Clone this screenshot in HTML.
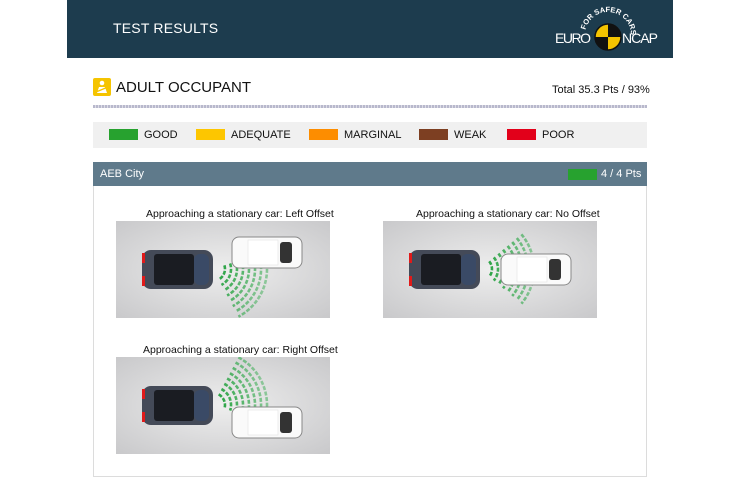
<!DOCTYPE html>
<html><head><meta charset="utf-8"><style>
*{margin:0;padding:0;box-sizing:border-box}
body{width:735px;height:485px;background:#fff;font-family:"Liberation Sans","DejaVu Sans",sans-serif;position:relative;overflow:hidden;color:#111}
.hdr{position:absolute;left:67px;top:0;width:606px;height:58px;background:#1d3c4e}
.hdr .t{position:absolute;left:46px;top:20px;color:#fff;font-size:14px;letter-spacing:.2px}
.abs{position:absolute}
.leg{position:absolute;left:93px;top:122px;width:554px;height:26px;background:#f0f0f0;font-size:11px}
.leg span{position:absolute;top:7px}
.leg i{position:absolute;top:7px;width:29px;height:11px}
.panel{position:absolute;left:93px;top:162px;width:554px;height:315px;border:1px solid #dcdcdc;border-top:none}
.ph{position:absolute;left:93px;top:162px;width:554px;height:24px;background:#5f7a8b;color:#fff;font-size:11px}
.cap{position:absolute;font-size:10.5px;color:#111;white-space:nowrap}
svg.sc{position:absolute;width:214px;height:97px}
</style></head><body>
<div class="hdr"><div class="t">TEST RESULTS</div>
<svg class="abs" style="left:485px;top:4px" width="110" height="52" viewBox="0 0 110 52">
<path id="tp" d="M33 31 A23 23 0 0 1 79 31" fill="none"/>
<text fill="#fff" font-size="7.5" font-weight="bold" font-family="Liberation Sans"><textPath href="#tp" startOffset="7%">FOR SAFER CARS</textPath></text>
<circle cx="56" cy="33" r="13" fill="#f5c400" stroke="#111" stroke-width="1.5"/>
<path d="M56 20 A13 13 0 0 1 69 33 L56 33Z M56 46 A13 13 0 0 1 43 33 L56 33Z" fill="#111"/>
<text x="3" y="39" fill="#fff" font-size="14" font-family="Liberation Sans" textLength="36">EURO</text>
<text x="70" y="39" fill="#fff" font-size="14" font-family="Liberation Sans" textLength="36">NCAP</text>
</svg></div>

<div class="abs" style="left:93px;top:78px;width:18px;height:18px;background:#f5c400;border-radius:2px">
<svg width="18" height="18"><circle cx="9" cy="5" r="2.3" fill="#fff"/><path d="M4 15 L6 9 H12 L14 15Z" fill="#fff"/><path d="M3 14 L15 9" stroke="#f5c400" stroke-width="1.3"/></svg></div>
<div class="abs" style="left:116px;top:79px;font-size:15px">ADULT OCCUPANT</div>
<div class="abs" style="left:552px;top:84px;font-size:11px">Total 35.3 Pts / 93%</div>
<div class="abs" style="left:93px;top:105px;width:554px;height:3px;background:repeating-linear-gradient(90deg,#b8b8cc 0 2px,#dcdce6 2px 3px)"></div>

<div class="leg">
<i style="left:16px;background:#27a22f"></i><span style="left:51px">GOOD</span>
<i style="left:103px;background:#fdc600"></i><span style="left:138px">ADEQUATE</span>
<i style="left:216px;background:#fd8d00"></i><span style="left:251px">MARGINAL</span>
<i style="left:326px;background:#7d3f22"></i><span style="left:361px">WEAK</span>
<i style="left:414px;background:#e2001a"></i><span style="left:449px">POOR</span>
</div>

<div class="panel"></div>
<div class="ph"><span class="abs" style="left:7px;top:6px">AEB City</span>
<i class="abs" style="left:475px;top:7px;width:29px;height:11px;background:#27a22f"></i>
<span class="abs" style="left:508px;top:6px">4 / 4 Pts</span></div>

<svg width="0" height="0" style="position:absolute">
<defs>
<radialGradient id="bg" cx="50%" cy="50%" r="70%"><stop offset="0" stop-color="#eeeeee"/><stop offset="1" stop-color="#c9c9cb"/></radialGradient>
<linearGradient id="gf" gradientUnits="userSpaceOnUse" x1="100" y1="0" x2="155" y2="0"><stop offset="0" stop-color="#1f9e3a"/><stop offset="1" stop-color="#22a63f" stop-opacity=".4"/></linearGradient>
<g id="dark">
<rect x="26" y="29" width="71" height="39" rx="9" fill="#444a58"/>
<rect x="38" y="33" width="40" height="31" rx="3" fill="#1a1c22"/>
<rect x="78" y="33" width="15" height="31" rx="6" fill="#3a4a66"/>
<rect x="26" y="32" width="3" height="10" fill="#e01a1a"/><rect x="26" y="55" width="3" height="10" fill="#e01a1a"/>
</g>
<g id="white">
<rect x="0" y="0" width="70" height="31" rx="7" fill="#fafafa" stroke="#888" stroke-width="1"/>
<rect x="48" y="5" width="12" height="21" rx="3" fill="#333"/>
<rect x="16" y="3" width="30" height="25" fill="#fff" stroke="#ddd" stroke-width=".5"/>
</g>
<g id="arcs" fill="none" stroke="url(#gf)" stroke-width="2.6" stroke-dasharray="4 1.6">
<path d="M106.2 40.3A12 12 0 0 1 106.2 55.7"/>
<path d="M110.8 36.4A18 18 0 0 1 110.8 59.6"/>
<path d="M115.4 32.6A24 24 0 0 1 115.4 63.4"/>
<path d="M120 28.7A30 30 0 0 1 120 67.3"/>
<path d="M124.6 24.9A36 36 0 0 1 124.6 71.1"/>
<path d="M129.2 21A42 42 0 0 1 129.2 75"/>
<path d="M133.8 17.1A48 48 0 0 1 133.8 78.9"/>
<path d="M138.4 13.3A54 54 0 0 1 138.4 82.7"/>
</g>
</defs></svg>

<div class="cap" style="left:146px;top:208px">Approaching a stationary car: Left Offset</div>
<svg class="sc" style="left:116px;top:221px" viewBox="0 0 214 97"><rect width="214" height="97" fill="url(#bg)"/><use href="#arcs" transform="rotate(22 97 48)"/><use href="#dark"/><use href="#white" x="116" y="16"/></svg>

<div class="cap" style="left:416px;top:208px">Approaching a stationary car: No Offset</div>
<svg class="sc" style="left:383px;top:221px" viewBox="0 0 214 97"><rect width="214" height="97" fill="url(#bg)"/><use href="#arcs"/><use href="#dark"/><use href="#white" x="118" y="33"/></svg>

<div class="cap" style="left:143px;top:344px">Approaching a stationary car: Right Offset</div>
<svg class="sc" style="left:116px;top:357px" viewBox="0 0 214 97"><rect width="214" height="97" fill="url(#bg)"/><use href="#arcs" transform="rotate(-22 97 48)"/><use href="#dark"/><use href="#white" x="116" y="50"/></svg>
</body></html>
